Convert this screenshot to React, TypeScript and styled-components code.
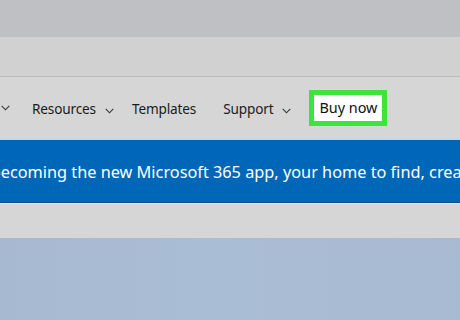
import React from "react";
import styled, { createGlobalStyle } from "styled-components";

const Global = createGlobalStyle`
  html, body { margin: 0; padding: 0; }
  body { width: 460px; height: 320px; overflow: hidden; background: #a8bbd3; font-family: "Noto Sans", "Open Sans", sans-serif; }
`;

const Page = styled.div`
  width: 460px;
  height: 320px;
  display: flex;
  flex-direction: column;
  overflow: hidden;
`;

const TopBand = styled.div`
  height: 37px;
  background: #bfc0c4;
  flex: none;
`;

const AddressBand = styled.div`
  height: 39px;
  background: #d1d1d1;
  border-bottom: 1px solid #b9b9b9;
  flex: none;
`;

const Nav = styled.nav`
  height: 61px;
  background: #d6d6d6;
  display: flex;
  align-items: center;
  flex: none;
  border-bottom: 2px solid #c9d6e4;
`;

const NavItem = styled.div<{ $ml: number }>`
  display: flex;
  align-items: baseline;
  gap: 9px;
  margin-left: ${(p) => p.$ml}px;
  font-size: 13.6px;
  letter-spacing: -0.15px;
  color: #1b1b1b;
  white-space: nowrap;
  padding-top: 1px;
`;

const ChevronIcon = styled.svg`
  width: 9px;
  height: 6px;
  flex: none;
`;

const Chevron = () => (
  <ChevronIcon viewBox="0 0 9 6" fill="none">
    <path d="M0.7 0.8 L4.5 4.8 L8.3 0.8" stroke="#333" strokeWidth="1.1" />
  </ChevronIcon>
);

const BuyBox = styled.div`
  margin-left: 18px;
  width: 78px;
  height: 36px;
  box-sizing: border-box;
  border: 5px solid #3de43b;
  background: #ffffff;
  display: flex;
  align-items: center;
  justify-content: center;
  font-size: 14.4px;
  color: #111;
  white-space: nowrap;
  padding-bottom: 1px;
`;

const Banner = styled.div`
  height: 62px;
  background: #0067b8;
  border-bottom: 1px solid #0b4f8a;
  display: flex;
  align-items: center;
  overflow: hidden;
  flex: none;
`;

const BannerText = styled.div`
  color: #ffffff;
  font-size: 16.3px;
  white-space: nowrap;
  margin-left: -9.3px;
  padding-top: 1px;
`;

const GapBand = styled.div`
  height: 34px;
  background: #d6d6d6;
  border-top: 1px solid #e2e6ea;
  flex: none;
`;

const Canvas = styled.div`
  flex: 1;
  background: linear-gradient(90deg, #a6b9d1 0%, #a9bdd5 45%, #a7bad2 100%);
`;

export default function App() {
  return (
    <Page>
      <Global />
      <TopBand />
      <AddressBand />
      <Nav>
        <NavItem $ml={1}>
          <Chevron />
        </NavItem>
        <NavItem $ml={22}>
          Resources <Chevron />
        </NavItem>
        <NavItem $ml={18}>Templates</NavItem>
        <NavItem $ml={27}>
          Support <Chevron />
        </NavItem>
        <BuyBox>Buy now</BuyBox>
      </Nav>
      <Banner>
        <BannerText>
          becoming the new Microsoft 365 app, your home to find, create, and share your content.
        </BannerText>
      </Banner>
      <GapBand />
      <Canvas />
    </Page>
  );
}
